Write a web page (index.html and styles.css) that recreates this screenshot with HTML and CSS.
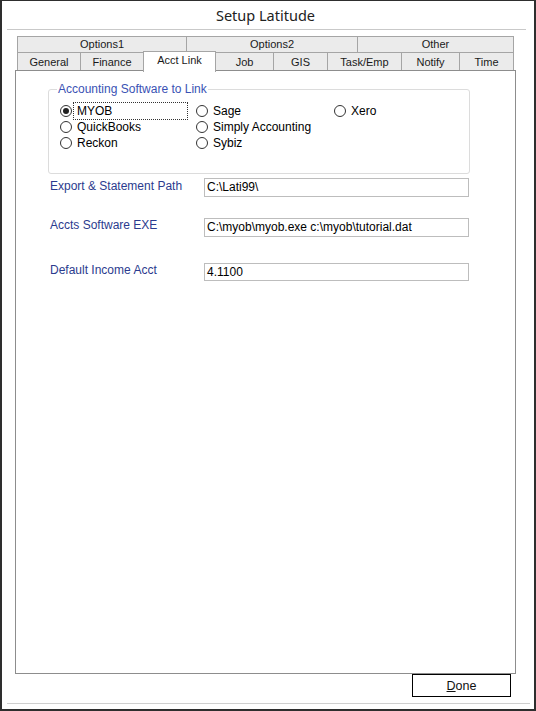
FILE: index.html
```html
<!DOCTYPE html>
<html lang="en">
<head>
    <meta charset="UTF-8">
    <title>Setup Latitude</title>
    <link rel="stylesheet" href="styles.css">
</head>
<body>
    <div class="window">
        <div class="title">Setup Latitude</div>

        <div class="tabs">
            <div class="tab-row top-row">
                <div class="tab">Options1</div>
                <div class="tab">Options2</div>
                <div class="tab">Other</div>
            </div>
            <div class="tab-row bottom-row">
                <div class="tab">General</div>
                <div class="tab">Finance</div>
                <div class="tab active">Acct Link</div>
                <div class="tab">Job</div>
                <div class="tab">GIS</div>
                <div class="tab">Task/Emp</div>
                <div class="tab">Notify</div>
                <div class="tab">Time</div>
            </div>
        </div>

        <div class="panel">
            <fieldset class="group">
                <legend>Accounting Software to Link</legend>
                <div class="radio-grid">
                    <div class="option focused"><span class="radio checked"></span><span>MYOB</span></div>
                    <div class="option"><span class="radio"></span><span>QuickBooks</span></div>
                    <div class="option"><span class="radio"></span><span>Reckon</span></div>
                    <div class="option"><span class="radio"></span><span>Sage</span></div>
                    <div class="option"><span class="radio"></span><span>Simply Accounting</span></div>
                    <div class="option"><span class="radio"></span><span>Sybiz</span></div>
                    <div class="option"><span class="radio"></span><span>Xero</span></div>
                </div>
            </fieldset>

            <div class="field-row first">
                <span class="field-label">Export &amp; Statement Path</span>
                <div class="field">C:\Lati99\</div>
            </div>
            <div class="field-row second">
                <span class="field-label">Accts Software EXE</span>
                <div class="field">C:\myob\myob.exe c:\myob\tutorial.dat</div>
            </div>
            <div class="field-row third">
                <span class="field-label">Default Income Acct</span>
                <div class="field">4.1100</div>
            </div>
        </div>

        <div class="footer">
            <button class="done-btn"><u>D</u>one</button>
        </div>
        <div class="footer-line"></div>
    </div>
</body>
</html>
```

FILE: styles.css
```css
* {
    box-sizing: border-box;
    margin: 0;
    padding: 0;
}

body {
    background: #ffffff;
    font-family: "Liberation Sans", Arial, sans-serif;
    font-size: 12px;
    color: #000;
}

.window {
    width: 536px;
    height: 711px;
    border: 2px solid #2e2e2e;
    border-top-width: 1px;
    background: #fff;
    display: flex;
    flex-direction: column;
}

.title {
    height: 29px;
    margin: 0 8px 0 5px;
    border-bottom: 1px solid #c9c9c9;
    font-family: "Noto Sans", "Liberation Sans", sans-serif;
    font-size: 14.5px;
    line-height: 29px;
    text-align: center;
    color: #222;
    padding-right: 2px;
}

.tabs {
    margin: 6px 0 0 15px;
    width: 497px;
    font-size: 11px;
    color: #1a1a1a;
}

.tab-row {
    display: grid;
}

.top-row {
    height: 16px;
    grid-template-columns: 169px 171px 157px;
}

.bottom-row {
    height: 18px;
    grid-template-columns: 63px 63px 73px 57px 54px 74px 58px 55px;
}

.tab {
    background: #ebebeb;
    border-top: 1px solid #a5a5a5;
    border-left: 1px solid #a5a5a5;
    text-align: center;
    line-height: 15px;
}

.tab:last-child {
    border-right: 1px solid #a5a5a5;
}

.bottom-row .tab {
    line-height: 18px;
}

.tab.active {
    position: relative;
    z-index: 1;
    background: #fff;
    margin-top: -1px;
    margin-bottom: -1px;
    border-right: 1px solid #a5a5a5;
    line-height: 16px;
}

.tab.active + .tab {
    border-left: none;
}

.panel {
    height: 604px;
    margin-left: 13px;
    width: 501px;
    border: 1px solid #8d8d8d;
}

.group {
    margin: 11px 0 0 32px;
    width: 422px;
    border: 1px solid #dcdcdc;
    border-radius: 3px;
    padding: 0 0 22px 11px;
}

.group legend {
    color: #3a52b4;
    margin-left: -3px;
    padding: 0 1px 0 1px;
    line-height: 14px;
}

.radio-grid {
    display: grid;
    grid-template-rows: repeat(3, 16px);
    grid-template-columns: 136px 138px auto;
    grid-auto-flow: column;
    margin-top: 7px;
}

.option {
    display: flex;
    align-items: center;
    gap: 5px;
    line-height: 14px;
}

.option.focused span:last-child {
    outline: 1px dotted #333;
    outline-offset: 0;
    width: 113px;
    height: 16px;
    line-height: 16px;
    margin-left: -3px;
    padding-left: 3px;
}

.radio {
    width: 12px;
    height: 12px;
    border: 1px solid #333;
    border-radius: 50%;
    background: #fff;
    display: flex;
    align-items: center;
    justify-content: center;
    flex-shrink: 0;
}

.radio.checked::after {
    content: "";
    width: 6px;
    height: 6px;
    border-radius: 50%;
    background: #222;
}

.field-row {
    display: flex;
    align-items: flex-start;
    padding-left: 34px;
}

.field-row.first {
    margin-top: 4px;
}

.field-row.second {
    margin-top: 21px;
}

.field-row.third {
    margin-top: 26px;
}

.field-label {
    width: 154px;
    color: #2b3b8e;
    line-height: 14px;
    padding-top: 1px;
}

.field-row.second .field-label,
.field-row.third .field-label {
    margin-top: -1px;
}

.field {
    width: 265px;
    height: 19px;
    border: 1px solid #bdbdbd;
    padding-left: 2px;
    line-height: 17px;
    color: #000;
}

.field-row.third .field {
    height: 18px;
}

.footer {
    display: flex;
    padding-left: 410px;
}

.done-btn {
    width: 99px;
    height: 23px;
    border: 1px solid #000;
    background: #fff;
    font-family: "Liberation Sans", Arial, sans-serif;
    font-size: 12.5px;
    color: #111;
}

.footer-line {
    margin: 6px 4px 0 5px;
    border-top: 1px solid #cfcfcf;
}
```
